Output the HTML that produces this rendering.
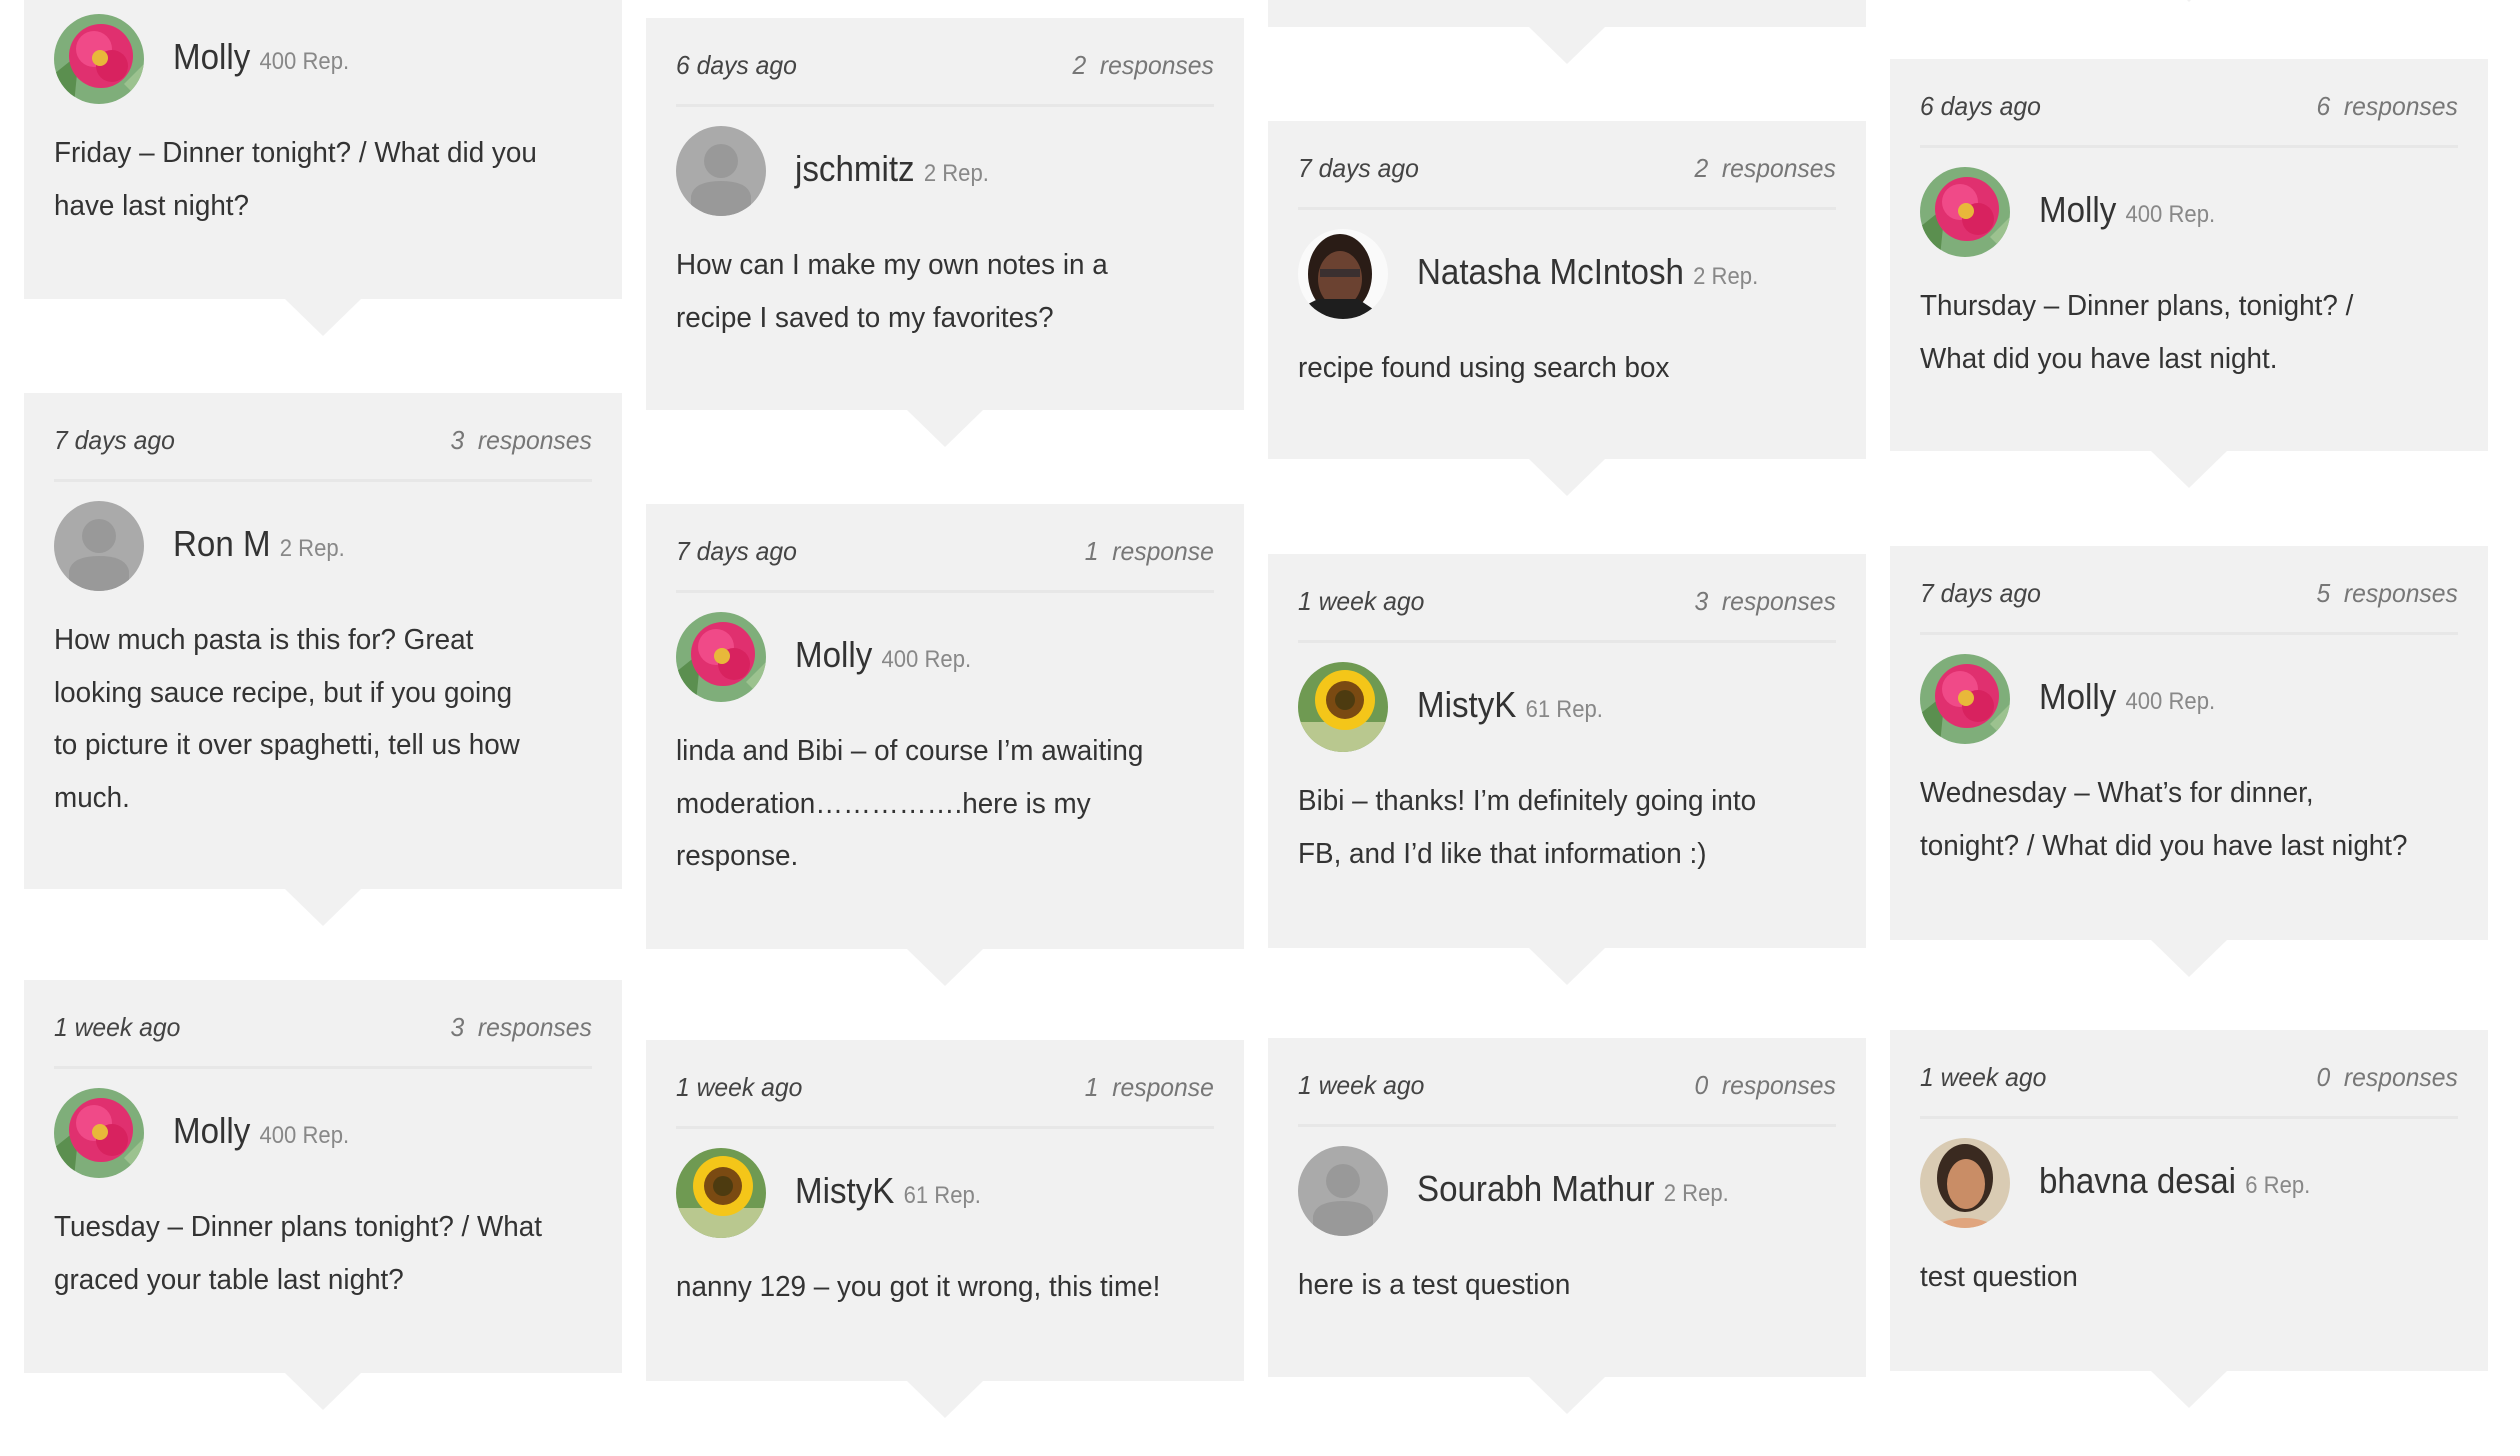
<!DOCTYPE html>
<html><head><meta charset="utf-8">
<style>
html,body{margin:0;padding:0;background:#fff;}
body{width:2520px;height:1456px;position:relative;overflow:hidden;font-family:"Liberation Sans",sans-serif;color:#333;}
.card{position:absolute;width:598px;background:#f1f1f1;box-sizing:border-box;padding:0 30px;}
.card:after{content:"";position:absolute;left:261px;bottom:-37px;border-left:38px solid transparent;border-right:38px solid transparent;border-top:37px solid #f1f1f1;}
.hd{margin-top:29px;height:36px;line-height:36px;font-size:26px;font-style:italic;position:relative;}
.hd .d{position:absolute;left:0;color:#444;transform:scaleX(.95);transform-origin:left center;white-space:nowrap;}
.hd .r{position:absolute;right:0;color:#777;transform:scaleX(.95);transform-origin:right center;white-space:nowrap;}
.dv{margin-top:21px;height:3px;background:#e7e7e7;}
.au{margin-top:19px;height:90px;position:relative;}
.au svg{position:absolute;left:0;top:0;width:90px;height:90px;}
.nm{position:absolute;left:119px;top:-2px;line-height:90px;font-size:36px;color:#333;white-space:nowrap;transform:scaleX(.92);transform-origin:left center;}
.nm small{font-size:24px;color:#888;}
.bd{margin-top:23px;font-size:29px;line-height:52.5px;white-space:nowrap;transform:scaleX(.96);transform-origin:left top;}
</style></head><body>
<svg width="0" height="0" style="position:absolute">
<defs>
<clipPath id="c"><circle cx="45" cy="45" r="45"/></clipPath>
<g id="flower"><g clip-path="url(#c)"><rect width="90" height="90" fill="#7fae7a"/><path d="M0 60 L25 40 L20 90 Z" fill="#5b8f4f"/><path d="M70 70 L90 50 L90 90 Z" fill="#9cc28f"/><circle cx="47" cy="42" r="32" fill="#e0306f"/><circle cx="40" cy="35" r="18" fill="#f04a88"/><circle cx="58" cy="52" r="16" fill="#d8225f"/><circle cx="46" cy="44" r="8" fill="#e8b83a"/></g></g>
<g id="sun"><g clip-path="url(#c)"><rect width="90" height="90" fill="#6f9a52"/><rect x="0" y="60" width="90" height="30" fill="#b9c88f"/><circle cx="47" cy="38" r="30" fill="#f4c619"/><circle cx="47" cy="38" r="19" fill="#7a4a12"/><circle cx="47" cy="38" r="10" fill="#4d3b10"/></g></g>
<g id="def"><g clip-path="url(#c)"><rect width="90" height="90" fill="#aaa"/><circle cx="45" cy="35" r="17" fill="#999"/><path d="M15 90 L15 70 Q18 55 45 55 Q72 55 75 70 L75 90 Z" fill="#999"/></g></g>
<g id="nat"><g clip-path="url(#c)"><rect width="90" height="90" fill="#fafafa"/><ellipse cx="42" cy="45" rx="32" ry="40" fill="#2a1c16"/><ellipse cx="42" cy="50" rx="22" ry="28" fill="#6b4231"/><rect x="22" y="40" width="40" height="8" fill="#3a3030"/><path d="M0 80 L20 70 L60 70 L90 90 L0 90Z" fill="#1e1e1e"/></g></g>
<g id="bha"><g clip-path="url(#c)"><rect width="90" height="90" fill="#d9cbb3"/><ellipse cx="45" cy="40" rx="28" ry="34" fill="#3a2a20"/><ellipse cx="46" cy="46" rx="19" ry="25" fill="#c98d66"/><path d="M10 90 Q45 70 80 90Z" fill="#e0a57e"/></g></g>
</defs></svg>

<!-- Column 1 -->
<div class="card" style="left:24px;top:-94px;height:393px">
<div class="hd"><span class="d"></span></div><div class="dv"></div>
<div class="au"><svg viewBox="0 0 90 90"><use href="#flower"/></svg><div class="nm">Molly <small>400 Rep.</small></div></div>
<div class="bd">Friday – Dinner tonight? / What did you<br>have last night?</div></div>

<div class="card" style="left:24px;top:393px;height:496px">
<div class="hd"><span class="d">7 days ago</span><span class="r">3&nbsp; responses</span></div><div class="dv"></div>
<div class="au"><svg viewBox="0 0 90 90"><use href="#def"/></svg><div class="nm">Ron M <small>2 Rep.</small></div></div>
<div class="bd">How much pasta is this for? Great<br>looking sauce recipe, but if you going<br>to picture it over spaghetti, tell us how<br>much.</div></div>

<div class="card" style="left:24px;top:980px;height:393px">
<div class="hd"><span class="d">1 week ago</span><span class="r">3&nbsp; responses</span></div><div class="dv"></div>
<div class="au"><svg viewBox="0 0 90 90"><use href="#flower"/></svg><div class="nm">Molly <small>400 Rep.</small></div></div>
<div class="bd">Tuesday – Dinner plans tonight? / What<br>graced your table last night?</div></div>

<!-- Column 2 -->
<div class="card" style="left:646px;top:18px;height:392px">
<div class="hd"><span class="d">6 days ago</span><span class="r">2&nbsp; responses</span></div><div class="dv"></div>
<div class="au"><svg viewBox="0 0 90 90"><use href="#def"/></svg><div class="nm">jschmitz <small>2 Rep.</small></div></div>
<div class="bd">How can I make my own notes in a<br>recipe I saved to my favorites?</div></div>

<div class="card" style="left:646px;top:504px;height:445px">
<div class="hd"><span class="d">7 days ago</span><span class="r">1&nbsp; response</span></div><div class="dv"></div>
<div class="au"><svg viewBox="0 0 90 90"><use href="#flower"/></svg><div class="nm">Molly <small>400 Rep.</small></div></div>
<div class="bd">linda and Bibi – of course I’m awaiting<br>moderation…………….here is my<br>response.</div></div>

<div class="card" style="left:646px;top:1040px;height:341px">
<div class="hd"><span class="d">1 week ago</span><span class="r">1&nbsp; response</span></div><div class="dv"></div>
<div class="au"><svg viewBox="0 0 90 90"><use href="#sun"/></svg><div class="nm">MistyK <small>61 Rep.</small></div></div>
<div class="bd">nanny 129 – you got it wrong, this time!</div></div>

<!-- Column 3 -->
<div class="card" style="left:1268px;top:-100px;height:127px"></div>

<div class="card" style="left:1268px;top:121px;height:338px">
<div class="hd"><span class="d">7 days ago</span><span class="r">2&nbsp; responses</span></div><div class="dv"></div>
<div class="au"><svg viewBox="0 0 90 90"><use href="#nat"/></svg><div class="nm">Natasha McIntosh <small>2 Rep.</small></div></div>
<div class="bd">recipe found using search box</div></div>

<div class="card" style="left:1268px;top:554px;height:394px">
<div class="hd"><span class="d">1 week ago</span><span class="r">3&nbsp; responses</span></div><div class="dv"></div>
<div class="au"><svg viewBox="0 0 90 90"><use href="#sun"/></svg><div class="nm">MistyK <small>61 Rep.</small></div></div>
<div class="bd">Bibi – thanks! I’m definitely going into<br>FB, and I’d like that information :)</div></div>

<div class="card" style="left:1268px;top:1038px;height:339px">
<div class="hd"><span class="d">1 week ago</span><span class="r">0&nbsp; responses</span></div><div class="dv"></div>
<div class="au"><svg viewBox="0 0 90 90"><use href="#def"/></svg><div class="nm">Sourabh Mathur <small>2 Rep.</small></div></div>
<div class="bd">here is a test question</div></div>

<!-- Column 4 -->
<div class="card" style="left:1890px;top:-200px;height:165px"></div>

<div class="card" style="left:1890px;top:59px;height:392px">
<div class="hd"><span class="d">6 days ago</span><span class="r">6&nbsp; responses</span></div><div class="dv"></div>
<div class="au"><svg viewBox="0 0 90 90"><use href="#flower"/></svg><div class="nm">Molly <small>400 Rep.</small></div></div>
<div class="bd">Thursday – Dinner plans, tonight? /<br>What did you have last night.</div></div>

<div class="card" style="left:1890px;top:546px;height:394px">
<div class="hd"><span class="d">7 days ago</span><span class="r">5&nbsp; responses</span></div><div class="dv"></div>
<div class="au"><svg viewBox="0 0 90 90"><use href="#flower"/></svg><div class="nm">Molly <small>400 Rep.</small></div></div>
<div class="bd">Wednesday – What’s for dinner,<br>tonight? / What did you have last night?</div></div>

<div class="card" style="left:1890px;top:1030px;height:341px">
<div class="hd"><span class="d">1 week ago</span><span class="r">0&nbsp; responses</span></div><div class="dv"></div>
<div class="au"><svg viewBox="0 0 90 90"><use href="#bha"/></svg><div class="nm">bhavna desai <small>6 Rep.</small></div></div>
<div class="bd">test question</div></div>

</body></html>
